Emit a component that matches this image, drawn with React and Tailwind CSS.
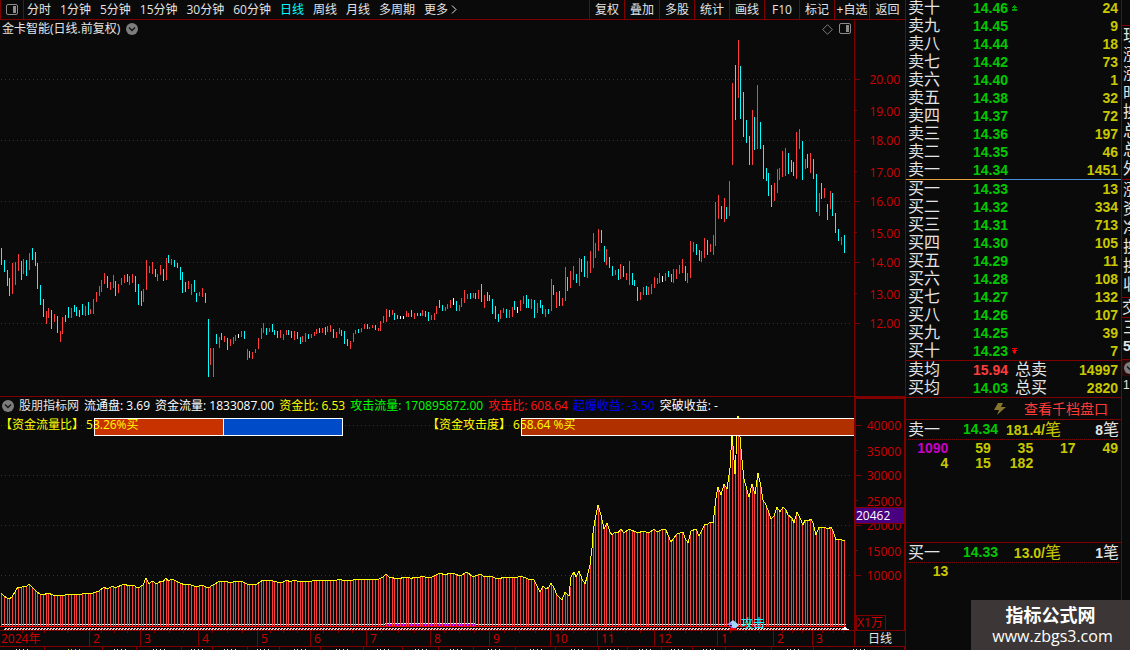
import clsx from 'clsx';

const PERIODS = ['分时', '1分钟', '5分钟', '15分钟', '30分钟', '60分钟', '日线', '周线', '月线', '多周期'];
const TOOLS = ['复权', '叠加', '多股', '统计', '画线', 'F10', '标记', '+自选', '返回'];

// one entry per trading day: colour, top, bottom
const CANDLES = `
c248-265 c260-272 c270-286 c278-296 r263-294 r262-285 r254-271 c261-280 r259-274 c260-276
r253-270 c248-260 c252-266 c263-289 c285-305 c299-317 r311-324 r308-318 c310-329 r314-322
c316-333 r331-342 r317-334 c315-322 c307-318 r308-318 c305-312 c307-316 c310-317 c304-315
r306-316 c302-315 r309-314 r299-314 r292-302 r286-296 r280-292 r273-284 c276-288 r282-290
r275-288 c281-296 r284-293 r278-285 r275-283 c274-282 r276-285 r274-283 c276-292 c284-305
c291-306 r289-302 r260-290 r266-273 r262-274 c269-277 r274-281 r265-275 c269-281 r258-280
c255-263 r259-265 c260-267 c263-268 c267-280 c272-293 c282-292 r281-289 r284-295 c280-292
c293-302 r292-296 r288-297 c293-303 c319-377 r348-365 r348-377 c334-344 r337-348 c333-340
r336-342 c338-350 r339-346 r337-344 r335-341 w334-338 r331-337 c331-339 r349-360 c351-358
r352-359 r349-353 r338-349 r328-339 r323-333 c328-335 r328-332 c324-332 c330-335 c331-338
r330-338 r334-340 r330-335 c330-335 c331-338 r331-340 c332-339 c337-344 r336-342 r333-342
c334-339 r334-338 r332-336 r329-334 c328-333 r328-333 c327-335 r326-332 r325-332 c329-338
r332-338 r328-334 c330-336 c331-344 c339-346 r341-349 r333-342 r330-334 c329-333 r328-332
r324-329 c324-329 r327-329 r325-328 c325-330 r328-331 r321-331 r316-323 r309-322 c310-317
r310-315 c313-320 c315-319 w316-319 w316-319 r311-317 r313-317 c310-317 r313-319 c313-316
c313-316 r310-316 c311-317 c312-321 r315-320 r313-320 r306-314 c300-308 c305-311 r307-311
r304-309 r300-308 w298-305 c301-311 r305-311 r298-307 r290-303 r294-299 c293-299 r293-298
c293-299 r290-299 c284-302 r295-308 c292-301 c295-301 c299-314 c306-319 c314-322 r310-319
r308-313 c309-318 r310-318 r307-317 c301-310 w307-313 r300-311 r296-304 c295-308 c299-308
r299-309 c300-318 r303-313 c300-308 c305-314 r309-317 c309-314 r279-311 c285-295 r292-308
c291-306 r298-306 r267-301 c277-291 r271-288 r266-280 c274-283 r258-286 c259-272 c256-277
r261-278 r251-273 r233-268 r243-258 r229-251 c230-243 c246-262 r249-265 c257-268 c266-276
r270-275 c269-280 r264-279 c266-277 r273-280 r261-285 c273-285 c280-286 c287-301 r292-300
r287-295 c286-295 r287-295 r284-294 r277-288 r278-284 r273-283 w276-282 r273-281 c271-277
c274-282 r269-283 r269-279 r265-274 r259-273 c266-281 r273-283 r241-278 r242-252 c244-255
c250-261 r251-262 r238-258 c240-255 r244-252 r235-255 r202-246 r195-219 c206-219 r198-222
c207-219 r181-216 r83-165 c65-120 r40-98 c66-119 c92-137 c120-143 c136-165 r110-165
c117-150 r85-149 c122-149 c145-179 c168-181 c173-196 c185-207 r183-201 r169-193 r168-180
r151-177 r148-176 c153-174 c160-172 c162-176 r132-179 r129-149 c141-180 r159-169 c154-168
r153-173 c159-179 c174-212 r193-216 c183-199 r188-198 c204-220 r191-209 c193-216 c213-233
c229-241 r237-245 c235-253
`.trim().split(/\s+/).map((s, i) => {
  const [top, bottom] = s.slice(1).split('-').map(Number);
  return { x: Math.floor(i * 2.79 + 1.55), top, bottom, kind: s[0] };
});

const CANDLE_FILL = { r: '#ff3c3c', c: '#00ffff', w: '#ffffff' };

// attack flow curve
const FLOW = `
1,593 4,596 7,598 9,599 12,597 15,592 18,587 21,588 23,586 26,587 29,584 32,587 34,589 37,592
40,594 43,595 48,593 53,595 60,596 71,594 82,594 85,593 90,594 93,593 99,591 104,587 107,589
113,586 115,588 124,584 129,586 133,585 138,588 143,585 146,578 149,584 152,581 157,584 161,581
163,582 166,578 168,581 172,579 180,583 185,585 188,584 194,586 199,586 202,585 208,588 213,585
220,581 223,581 228,582 233,582 235,581 238,582 241,581 249,585 257,584 263,580 266,581 269,580
277,582 283,582 287,580 290,582 294,580 297,581 312,581 314,580 337,580 339,579 342,580 353,580
355,579 358,580 361,579 379,579 383,577 386,574 389,577 398,579 405,577 408,577 412,579 413,577
420,577 422,576 425,577 432,577 440,573 445,575 450,573 455,574 460,576 467,572 473,577 480,574
485,577 490,576 498,579 505,577 515,578 521,576 528,579 534,580 538,588 540,592 543,586 546,589
549,587 551,583 554,588 557,595 562,600 565,592 569,596 571,577 574,572 576,577 579,571 582,579
585,584 587,577 590,565 592,548 593,533 595,520 598,505 601,515 604,529 607,523 610,532 612,535
615,532 618,533 621,529 624,533 629,529 638,533 643,531 649,533 654,529 657,532 663,529 666,530
671,542 677,534 683,532 685,538 688,543 691,531 696,529 699,536 705,524 707,525 710,522 713,523
716,498 718,487 721,495 724,484 727,489 730,468 732,432 735,474 738,416 740,437 742,460 744,479
747,490 749,497 752,484 755,494 758,473 761,487 763,500 766,505 769,513 771,519 774,516 777,507
780,512 783,507 786,510 788,515 792,518 794,523 797,512 800,518 803,525 805,520 808,521 811,519
813,523 816,535 819,527 822,528 824,527 828,529 831,527 833,531 836,540 839,539 842,540 845,541
`.trim().split(/\s+/).map((s) => s.split(',').map(Number));

const flowAt = (x) => {
  const i = Math.max(1, FLOW.findIndex((p) => p[0] >= x));
  const [x0, y0] = FLOW[i - 1];
  const [x1, y1] = FLOW[i];
  return Math.round(y0 + ((y1 - y0) * (x - x0)) / (x1 - x0));
};

const PRICE_AXIS = [
  ['20.00', 79], ['19.00', 110], ['18.00', 140], ['17.00', 171], ['16.00', 201],
  ['15.00', 232], ['14.00', 262], ['13.00', 293], ['12.00', 323],
];
const FLOW_AXIS = [
  ['40000', 425], ['35000', 450], ['30000', 475], ['25000', 500], ['20000', 525],
  ['15000', 550], ['10000', 575],
];

const MONTHS = [
  ['2024年', 89], ['2', 51], ['3', 58], ['4', 59], ['5', 53], ['6', 56], ['7', 64], ['8', 59],
  ['9', 61], ['10', 47], ['11', 57], ['12', 63], ['1', 56], ['2', 39], ['3', 42],
];

const LEGEND = [
  ['流通盘: 3.69', 'text-white'],
  ['资金流量: 1833087.00', 'text-white'],
  ['资金比: 6.53', 'text-[#ffff00]'],
  ['攻击流量: 170895872.00', 'text-[#00ff00]'],
  ['攻击比: 608.64', 'text-[#ff1414]'],
  ['起爆收益: -3.50', 'text-[#0000ff]'],
  ['突破收益: -', 'text-white'],
];

const ASKS = [
  ['卖十', '14.46', 24], ['卖九', '14.45', 9], ['卖八', '14.44', 18], ['卖七', '14.42', 73],
  ['卖六', '14.40', 1], ['卖五', '14.38', 32], ['卖四', '14.37', 72], ['卖三', '14.36', 197],
  ['卖二', '14.35', 46], ['卖一', '14.34', 1451],
];
const BIDS = [
  ['买一', '14.33', 13], ['买二', '14.32', 334], ['买三', '14.31', 713], ['买四', '14.30', 105],
  ['买五', '14.29', 11], ['买六', '14.28', 108], ['买七', '14.27', 132], ['买八', '14.26', 107],
  ['买九', '14.25', 39], ['买十', '14.23', 7],
];

const TABS = [43, 55, 32, 42, 29, 33, 30, 39, 41, 37, 33, 33, 40, 38, 40, 28, 32, 29, 31, 43, 40, 87];

const PanelIcon = ({ className }) => (
  <svg className={className} width="12" height="12" viewBox="0 0 12 12" fill="none">
    <rect x="0.5" y="0.5" width="11" height="10" rx="1.5" stroke="currentColor" />
    <rect x="7" y="2" width="3" height="7" fill="currentColor" />
  </svg>
);

const RoundChevron = () => (
  <svg width="12" height="12" viewBox="0 0 12 12">
    <circle cx="6" cy="6" r="6" fill="#7d7d7d" />
    <path d="M3 4.5L6 7.5L9 4.5" fill="none" stroke="#141414" strokeWidth="1.4" />
  </svg>
);

const GridLine = ({ y }) => (
  <line x1="1" x2="852" y1={y + 0.5} y2={y + 0.5} stroke="#7a1212" strokeDasharray="1 3" />
);

const Axis = ({ items, top, height }) => (
  <svg width="49" height={height} viewBox={`0 ${top} 49 ${height}`} shapeRendering="crispEdges">
    {items.map(([label, y], i) => (
      <g key={label}>
        <rect x="0" y={y} width={i % 2 ? 2 : 5} height="1" fill="#800000" />
        <text x="45" y={y + (i % 2 ? 6 : 5)} textAnchor="end" fontSize="12" fill="#d00000">
          {label}
        </text>
      </g>
    ))}
  </svg>
);

const Toolbar = () => (
  <header className="flex h-5 border-b border-[#800000] text-[#e4e4e4]">
    <button aria-label="侧栏" className="flex w-6 items-center justify-center border-x border-[#800000] text-[#8c8c8c]">
      <PanelIcon />
    </button>
    <nav className="flex gap-[9px] pl-[3px]">
      {PERIODS.map((p) => (
        <button key={p} className={clsx('leading-[18px]', p === '日线' && 'text-[#00ffff]')}>
          {p}
        </button>
      ))}
      <button className="flex items-center gap-[3px] leading-[18px]">
        更多
        <svg width="6" height="9" viewBox="0 0 6 9" fill="none" stroke="currentColor">
          <path d="M1 0.5L5 4.5L1 8.5" />
        </svg>
      </button>
    </nav>
    <nav className="ml-auto flex">
      {TOOLS.map((t) => (
        <button key={t} className="w-[35px] whitespace-nowrap border-l border-[#800000] text-center leading-[18px] last:w-9">
          {t}
        </button>
      ))}
    </nav>
  </header>
);

const PriceChart = () => (
  <section className="flex">
    <div className="relative min-w-0 flex-1">
      <svg className="block h-[376px] w-full" viewBox="0 20 854 376" preserveAspectRatio="none" shapeRendering="crispEdges">
        {PRICE_AXIS.filter((_, i) => i % 2 === 0).map(([label, y]) => (
          <GridLine key={label} y={y} />
        ))}
        {CANDLES.map((c) => (
          <rect key={c.x} x={c.x} y={c.top} width="1" height={c.bottom - c.top} fill={CANDLE_FILL[c.kind]} />
        ))}
      </svg>
      <div className="absolute inset-x-0 top-0 flex h-[18px] items-center gap-[6px] pl-[2px] pr-[3px]">
        <h1 className="text-[#e4e4e4]">金卡智能(日线.前复权)</h1>
        <RoundChevron />
        <svg className="ml-auto" width="11" height="11" viewBox="0 0 11 11" fill="none" stroke="#7d7d7d">
          <path d="M5.5 0.7L10.3 5.5L5.5 10.3L0.7 5.5Z" />
        </svg>
        <PanelIcon className="text-[#8c8c8c]" />
      </div>
    </div>
    <div className="w-[51px] border-l border-[#800000]">
      <Axis items={PRICE_AXIS} top={20} height={376} />
    </div>
  </section>
);

const Meter = ({ label, value }) => (
  <span className="absolute left-0 top-0 flex gap-[2px] whitespace-nowrap leading-[14px] text-[#ffff00]">
    <span>{label}</span>
    <span>{value}</span>
  </span>
);

const FlowChart = () => (
  <section className="flex border-y border-[#800000]">
    <div className="relative min-w-0 flex-1">
      <svg className="block h-[233px] w-full" viewBox="0 397 854 233" preserveAspectRatio="none" shapeRendering="crispEdges">
        {[425, 475, 525, 575].map((y) => (
          <GridLine key={y} y={y} />
        ))}
        <rect x="2" y="624" width="844" height="1" fill="#fff" />
        <rect x="385" y="623" width="90" height="1" fill="#fff" />
        <rect x="385" y="624" width="90" height="2" fill="#a000c8" />
        {CANDLES.map(({ x }) => (
          <rect key={x} x={x} y={flowAt(x)} width="1" height={627 - flowAt(x)} fill="#ff3c3c" />
        ))}
        <polyline points={FLOW.map((p) => p.join(',')).join(' ')} fill="none" stroke="#ffff00" />
        <rect x="0" y="626" width="846" height="1" fill="#ff0000" />
        <line x1="5" x2="846" y1="628.5" y2="628.5" stroke="#ffc8c8" strokeDasharray="2 1" />
        <line x1="4" x2="848" y1="629.5" y2="629.5" stroke="#ffc8c8" strokeDasharray="2 1" />
        <path d="M841 630L845 627L850 630Z" fill="#fff" />
        <path d="M728 630L733 626L738 630Z" fill="#ff0000" />
      </svg>

      <div className="absolute inset-x-0 top-0">
        <div className="flex h-[17px] items-center gap-[5px] whitespace-nowrap pl-[2px]">
          <RoundChevron />
          <span className="text-[#e4e4e4]">股朋指标网</span>
          {LEGEND.map(([text, color]) => (
            <span key={text} className={color}>{text}</span>
          ))}
        </div>
        <div className="mt-1 flex h-[18px]">
          <div className="relative flex w-[343px] pl-[94px]">
            <div className="w-[130px] border border-white bg-[#c83200]" />
            <div className="flex-1 border border-l-0 border-white bg-[#004bc8]" />
            <Meter label="【资金流量比】" value="53.26%买" />
          </div>
          <div className="relative ml-[84px] flex flex-1 pl-[94px]">
            <div className="flex-1 border border-r-0 border-white bg-[#b03000]" />
            <Meter label="【资金攻击度】" value="658.64 %买" />
          </div>
        </div>
      </div>

      <div className="absolute bottom-0 left-[85%] flex items-center leading-3 text-[#00ffff]">
        <svg width="15" height="10" viewBox="0 0 15 10">
          <path d="M7 1L13 6L10 9H5L6 6H1Z" fill="#9fd8ff" />
          <path d="M1 5H6M3 7L7 9" stroke="#c03cff" />
        </svg>
        攻击
      </div>
    </div>

    <div className="relative w-[51px] border-2 border-b-0 border-r border-[#800000]">
      <Axis items={FLOW_AXIS} top={399} height={231} />
      <span className="absolute left-0 right-0 top-[108px] border-y border-[#800000] bg-[#480080] leading-[15px] text-white">20462</span>
      <span className="absolute bottom-0 left-0 w-[30px] whitespace-nowrap border border-b-0 border-[#800000] leading-[14px] text-[#d00000]">X1万</span>
    </div>
  </section>
);

const DateAxis = () => (
  <div className="flex h-4 border-b border-[#800000] leading-[15px]">
    <div className="flex min-w-0 flex-1 text-[#d00000]">
      {MONTHS.map(([m, days], i) => (
        <div key={i} className="relative min-w-0 basis-0" style={{ flexGrow: days }}>
          <p className={clsx('whitespace-nowrap', i > 0 ? 'border-l border-[#800000] pl-[3px]' : 'pl-px')}>{m}</p>
          <div className="absolute inset-x-0 top-0 flex h-[2px] justify-evenly">
            <i className="w-px bg-[#800000]" />
            <i className="w-px bg-[#800000]" />
            <i className="w-px bg-[#800000]" />
          </div>
        </div>
      ))}
    </div>
    <button className="w-[51px] border-l border-[#800000] text-center text-[#e4e4e4]">日线</button>
  </div>
);

const Book = ({ rows, marked, mark }) => (
  <table className="w-full">
    <tbody>
      {rows.map(([label, price, volume]) => (
        <tr key={label} className="h-[18px] text-sm font-bold leading-[18px]">
          <th scope="row" className="w-[67px] p-0 pl-[2px] text-left text-base font-normal leading-[18px] text-[#e4e4e4]">{label}</th>
          <td className="w-[39px] p-0 text-[#00c800]">{price}</td>
          <td className="p-0">{label === marked && mark}</td>
          <td className="p-0 pr-[3px] text-right text-[#c8c800]">{volume}</td>
        </tr>
      ))}
    </tbody>
  </table>
);

const Queue = ({ side, price, average, count, orders }) => (
  <div className="text-sm font-bold leading-[19px] text-[#c8c800]">
    <div className="mx-[2px] flex h-5 border-b border-dotted border-[#800000]">
      <span className="w-[55px] text-base font-normal leading-[19px] text-[#e4e4e4]">{side}</span>
      <span className="w-[43px] text-[#00c800]">{price}</span>
      <span className="w-[55px] whitespace-nowrap text-right">
        {average}/<span className="text-base font-normal leading-[19px]">笔</span>
      </span>
      <span className="ml-auto text-[#e4e4e4]">{count}<span className="text-base font-normal leading-[19px]">笔</span></span>
    </div>
    <div className="grid grid-cols-5 pr-[3px] pt-px text-right leading-[15px]">
      {orders.map((n) => (
        <span key={n} className={clsx(n > 1000 && 'text-[#c800c8]')}>{n}</span>
      ))}
    </div>
  </div>
);

const OrderPanel = () => (
  <aside className="w-[217px] border-x border-[#800000]">
    <div className="-mt-px">
      <Book
        rows={ASKS}
        marked="卖十"
        mark={
          <svg width="5" height="6" viewBox="0 0 5 6" fill="#00a000">
            <path d="M2 0H3V1H4V2H5V3H3V4H5V6H0V4H2V3H0V2H1V1H2Z" />
          </svg>
        }
      />
    </div>
    <div className="flex h-px">
      <div className="w-24 bg-[#e6a03c]" />
      <div className="flex-1 bg-[#4a8cdc]" />
    </div>
    <Book
      rows={BIDS}
      marked="买十"
      mark={
        <svg width="5" height="6" viewBox="0 0 5 6" fill="#ff0000">
          <path d="M0 0H5V1H3V2H5V3H4V5H3V6H2V5H1V3H0V2H2V1H0Z" />
        </svg>
      }
    />
    <table className="w-full border-y border-[#800000]">
      <tbody>
        {[['卖均', '15.94', '总卖', 14997], ['买均', '14.03', '总买', 2820]].map(([a, price, b, total]) => (
          <tr key={a} className="h-[18px] text-sm font-bold leading-[18px]">
            <th scope="row" className="w-[67px] p-0 pl-[2px] text-left text-base font-normal leading-[18px] text-[#e4e4e4]">{a}</th>
            <td className={clsx('w-[42px] p-0', a === '卖均' ? 'text-[#ff3c3c]' : 'text-[#00c800]')}>{price}</td>
            <th scope="row" className="p-0 text-left text-base font-normal leading-[18px] text-[#e4e4e4]">{b}</th>
            <td className="p-0 pr-[3px] text-right text-[#c8c800]">{total}</td>
          </tr>
        ))}
      </tbody>
    </table>
    <a href="#depth" className="flex h-[22px] items-center justify-end gap-[18px] border-b border-[#800000] pr-[13px] text-sm text-[#ff3c3c]">
      <svg width="12" height="14" viewBox="0 0 12 14" fill="#85752d">
        <path d="M4 1H9L7 5H12L3 13L5 8H0Z" />
      </svg>
      查看千档盘口
    </a>
    <div className="h-[123px] border-b border-[#800000]">
      <Queue side="卖一" price="14.34" average="181.4" count={8} orders={[1090, 59, 35, 17, 49, 4, 15, 182]} />
    </div>
    <Queue side="买一" price="14.33" average="13.0" count={1} orders={[13]} />
  </aside>
);

// neighbouring quote panel, only its left edge is on screen
const SideStrip = () => (
  <div className="w-2 overflow-hidden text-base leading-[19px] text-[#e4e4e4]">
    <div className="h-[26px] border-b border-[#800000]" />
    <div className="h-[154px] w-8 border-b border-[#800000] pl-px">
      {['现', '涨', '涨', '时', '换', '总', '总', '外'].map((c, i) => <p key={i}>{c}</p>)}
    </div>
    <div className="h-[118px] w-8 border-b border-[#800000] pl-px">
      {['涨', '资', '净', '换', '换', '收'].map((c, i) => <p key={i}>{c}</p>)}
    </div>
    <p className="h-5 w-8 border-b border-[#800000]">交</p>
    <div className="h-[42px] w-8 border-b border-[#800000] pl-px">
      <p>三</p>
      <p className="text-sm font-bold leading-[19px]">5</p>
    </div>
    <div className="flex h-4 w-8 items-center bg-[#280a0a] pl-[2px]">
      <RoundChevron />
    </div>
    <p className="w-8 pl-px text-xs leading-[19px]">1</p>
  </div>
);

// top edge of the template tabs below the fold
const TabEdge = () => (
  <div className="flex h-[3px]">
    {TABS.map((w, i) => (
      <div key={i} className="flex basis-0 justify-center border-r border-[#800000]" style={{ flexGrow: w }}>
        <svg width="14" height="3" viewBox="0 0 14 3" shapeRendering="crispEdges" fill={i === 1 ? '#c8c800' : '#e4e4e4'}>
          <path d="M1 2H2V3H1ZM4 2H5V3H4ZM8 2H9V3H8ZM12 2H13V3H12Z" />
        </svg>
      </div>
    ))}
  </div>
);

export default function App() {
  return (
    <div className="relative flex min-h-screen overflow-hidden bg-[#0a0a0a] font-['Open_Sans','Noto_Sans_CJK_SC',sans-serif] text-xs">
      <main className="min-w-0 flex-1">
        <Toolbar />
        <PriceChart />
        <FlowChart />
        <DateAxis />
        <TabEdge />
      </main>
      <div className="flex font-['Liberation_Sans','Noto_Sans_CJK_SC',sans-serif]">
        <OrderPanel />
        <SideStrip />
      </div>
      <footer className="absolute bottom-0 right-0 h-[50px] w-[159px] bg-[#3c3736] pt-1 text-center text-white">
        <p className="text-lg font-bold leading-[22px]">指标公式网</p>
        <p className="pl-1 text-base leading-5">www.zbgs3.com</p>
      </footer>
    </div>
  );
}
